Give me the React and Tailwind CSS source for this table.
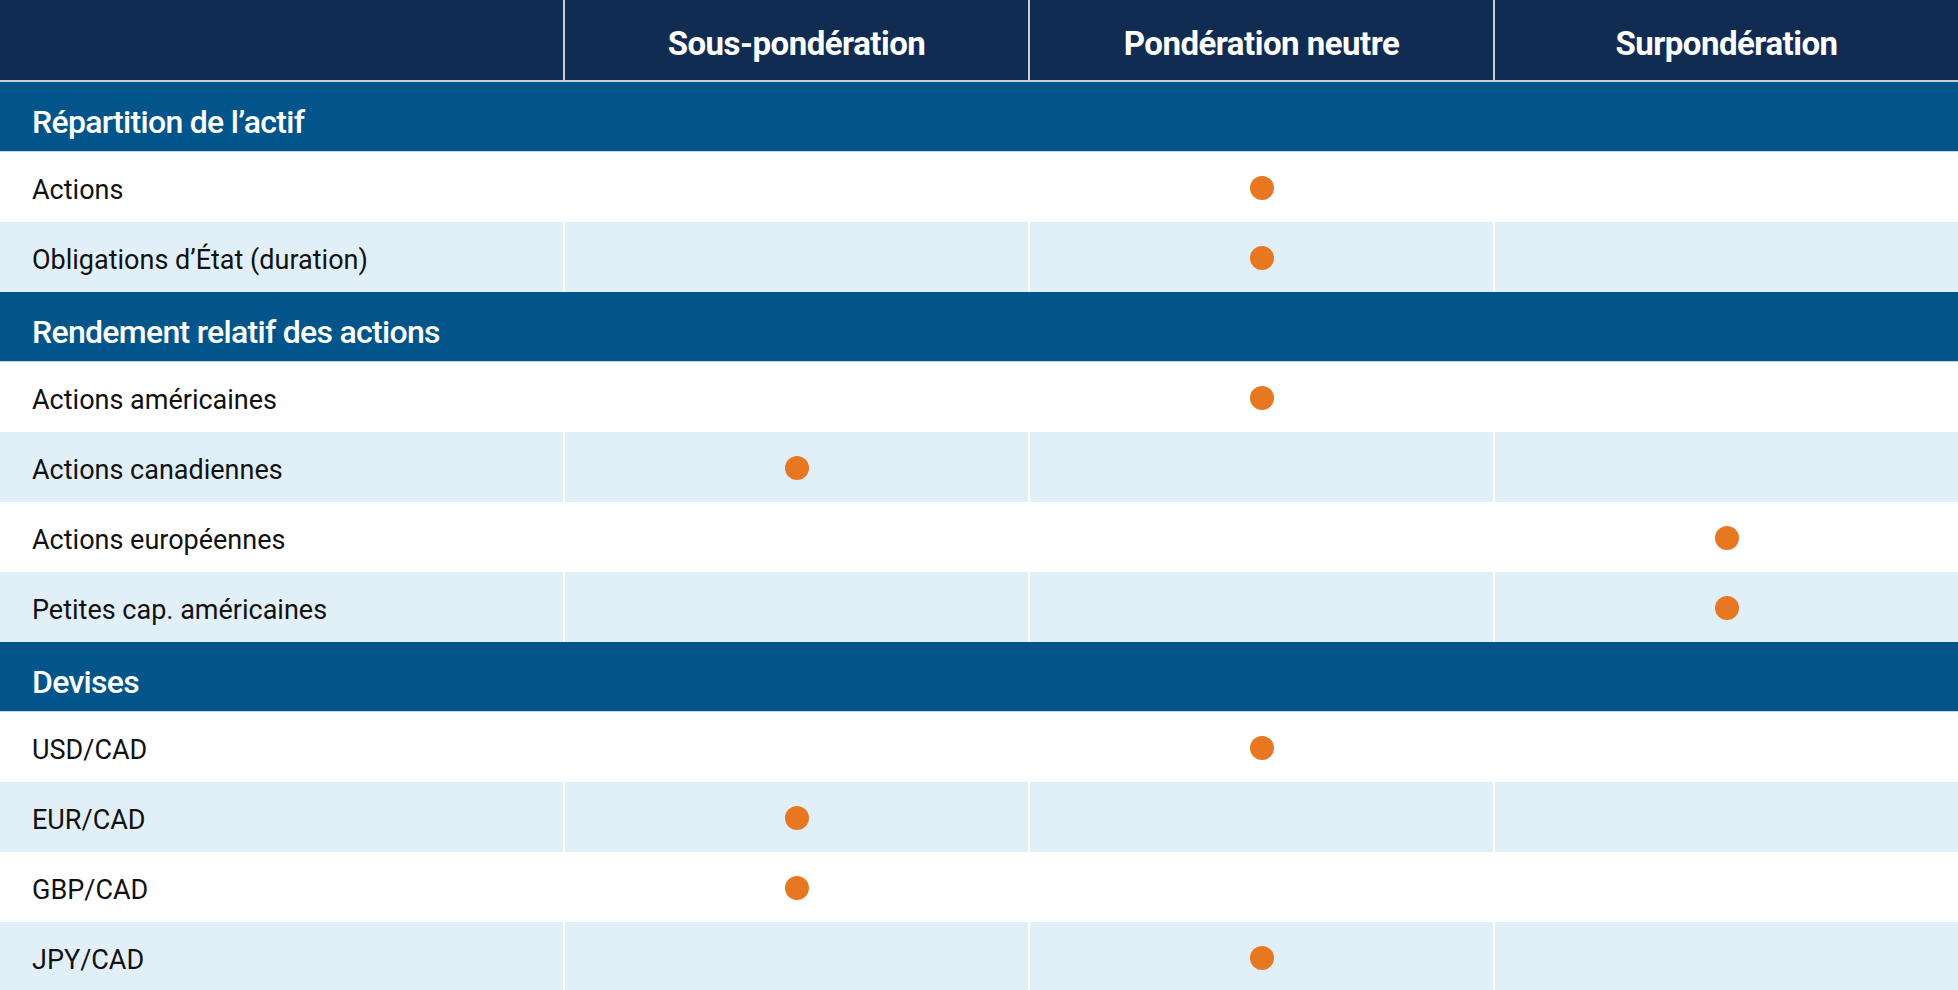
import React from "react";

const columns = ["Sous-pondération", "Pondération neutre", "Surpondération"];

// position: 0 = sous, 1 = neutre, 2 = sur
const sections = [
  {
    title: "Répartition de l’actif",
    rows: [
      { label: "Actions", pos: 1 },
      { label: "Obligations d’État (duration)", pos: 1 },
    ],
  },
  {
    title: "Rendement relatif des actions",
    rows: [
      { label: "Actions américaines", pos: 1 },
      { label: "Actions canadiennes", pos: 0 },
      { label: "Actions européennes", pos: 2 },
      { label: "Petites cap. américaines", pos: 2 },
    ],
  },
  {
    title: "Devises",
    rows: [
      { label: "USD/CAD", pos: 1 },
      { label: "EUR/CAD", pos: 0 },
      { label: "GBP/CAD", pos: 0 },
      { label: "JPY/CAD", pos: 1 },
    ],
  },
];

const font = { fontFamily: "Roboto, 'Liberation Sans', sans-serif" };

const Dot = () => <span className="block w-6 h-6 rounded-full bg-[#e87722]"></span>;

const App = () => {
  return (
    <div className="w-[1958px] h-[990px] overflow-hidden bg-white" style={font}>
      <div className="grid grid-cols-[563px_465px_465px_465px] h-[82px] bg-[#112c52] border-b-2 border-[#c9ced6]">
        <div></div>
        {columns.map((c) => (
          <div
            key={c}
            className="flex items-center justify-center border-l-2 border-[#c9ced6] text-white font-bold text-[33px] tracking-[-0.5px] pt-[7px]"
          >
            {c}
          </div>
        ))}
      </div>

      {sections.map((s) => (
        <div key={s.title}>
          <div className="h-[70px] bg-[#02558a] flex items-center pl-[32px] pt-[11px] text-white font-medium text-[32px] tracking-[-0.7px] border-b border-[#c4d6e4]">
            {s.title}
          </div>
          {s.rows.map((r, i) => (
            <div
              key={r.label}
              className={
                "grid grid-cols-[563px_465px_465px_465px] h-[70px] " +
                (i % 2 === 0 ? "bg-white" : "bg-[#e1eff8]")
              }
            >
              <div className="flex items-center pl-[32px] pt-[6px] text-[27px] text-[#111111]">
                {r.label}
              </div>
              {[0, 1, 2].map((p) => (
                <div
                  key={p}
                  className="flex items-center justify-center border-l-2 border-white pt-[1px]"
                >
                  {r.pos === p && <Dot />}
                </div>
              ))}
            </div>
          ))}
        </div>
      ))}
    </div>
  );
};

export default App;
